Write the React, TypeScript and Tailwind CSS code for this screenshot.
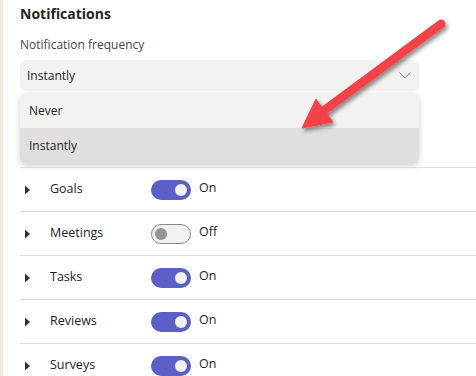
import React from "react";

const rows = [
    { name: "Goals", on: true },
    { name: "Meetings", on: false },
    { name: "Tasks", on: true },
    { name: "Reviews", on: true },
    { name: "Surveys", on: true },
];

const Toggle = ({ on }: { on: boolean }) => {
    if (on) {
        return (
            <div className="w-[40px] h-[20px] rounded-full bg-[#5b5fc7] flex items-center justify-end pr-[4px]">
                <div className="w-[12px] h-[12px] rounded-full bg-[#f3f2f1]" />
            </div>
        );
    }
    return (
        <div className="w-[40px] h-[20px] rounded-full bg-[#f3f2f1] border border-[#8a8886] flex items-center pl-[3px]">
            <div className="w-[12px] h-[12px] rounded-full bg-[#979593]" />
        </div>
    );
};

const Arrow = () => (
    <svg className="absolute left-0 top-0" width="476" height="376" viewBox="0 0 476 376">
        <defs>
            <filter id="sh" x="-20%" y="-20%" width="140%" height="140%">
                <feDropShadow dx="2" dy="3" stdDeviation="2" floodColor="#000" floodOpacity="0.45" />
            </filter>
        </defs>
        <g filter="url(#sh)" fill="#f4434a" stroke="#f4434a">
            <line x1="441" y1="24" x2="318" y2="115" strokeWidth="9" strokeLinecap="round" />
            <polygon points="316,99 302,128 333,122" strokeWidth="1" strokeLinejoin="round" />
        </g>
    </svg>
);

export default function App() {
    return (
        <div className="relative w-[476px] h-[376px] overflow-hidden bg-white flex font-['Open_Sans',sans-serif] text-[#252423]">
            <div className="w-[3px] shrink-0 bg-[#f7e8e8]" />
            <div className="flex-1 pl-[17px]">
                <h2 className="pt-[4px] text-[14px] leading-[20px] font-bold">Notifications</h2>
                <div className="mt-[13px] text-[12px] leading-[16px] text-[#484644]">Notification frequency</div>

                <div className="mt-[7px] w-[399px] h-[31px] rounded-md bg-[#f3f2f1] flex items-center justify-between pl-[7px] pr-[8px]">
                    <span className="text-[12px]">Instantly</span>
                    <svg width="12" height="7" viewBox="0 0 12 7" fill="none">
                        <path d="M0.5 0.5 L6 6 L11.5 0.5" stroke="#8a8886" strokeWidth="1" />
                    </svg>
                </div>

                <div className="mt-[2px] w-[399px] rounded-md overflow-hidden shadow-[0_2px_6px_rgba(0,0,0,0.18)]">
                    <div className="h-[35px] bg-[#f3f2f1] flex items-center pl-[9px] text-[12px]">Never</div>
                    <div className="h-[36px] bg-[#e1dfdd] flex items-center pl-[9px] text-[12px]">Instantly</div>
                </div>

                <div className="mt-[3px]">
                    {rows.map((r) => (
                        <div key={r.name} className="h-[44px] border-t border-[#e1dfdd] flex items-center">
                            <svg className="ml-[5px]" width="5" height="8" viewBox="0 0 5 8">
                                <path d="M0.5 0.5 L4.5 4 L0.5 7.5 Z" fill="#323130" stroke="#323130" strokeLinejoin="round" />
                            </svg>
                            <span className="ml-[20px] w-[101px] text-[12.5px]">{r.name}</span>
                            <Toggle on={r.on} />
                            <span className="ml-[8px] text-[12.5px] -mt-[2px]">{r.on ? "On" : "Off"}</span>
                        </div>
                    ))}
                </div>
            </div>
            <Arrow />
        </div>
    );
}
